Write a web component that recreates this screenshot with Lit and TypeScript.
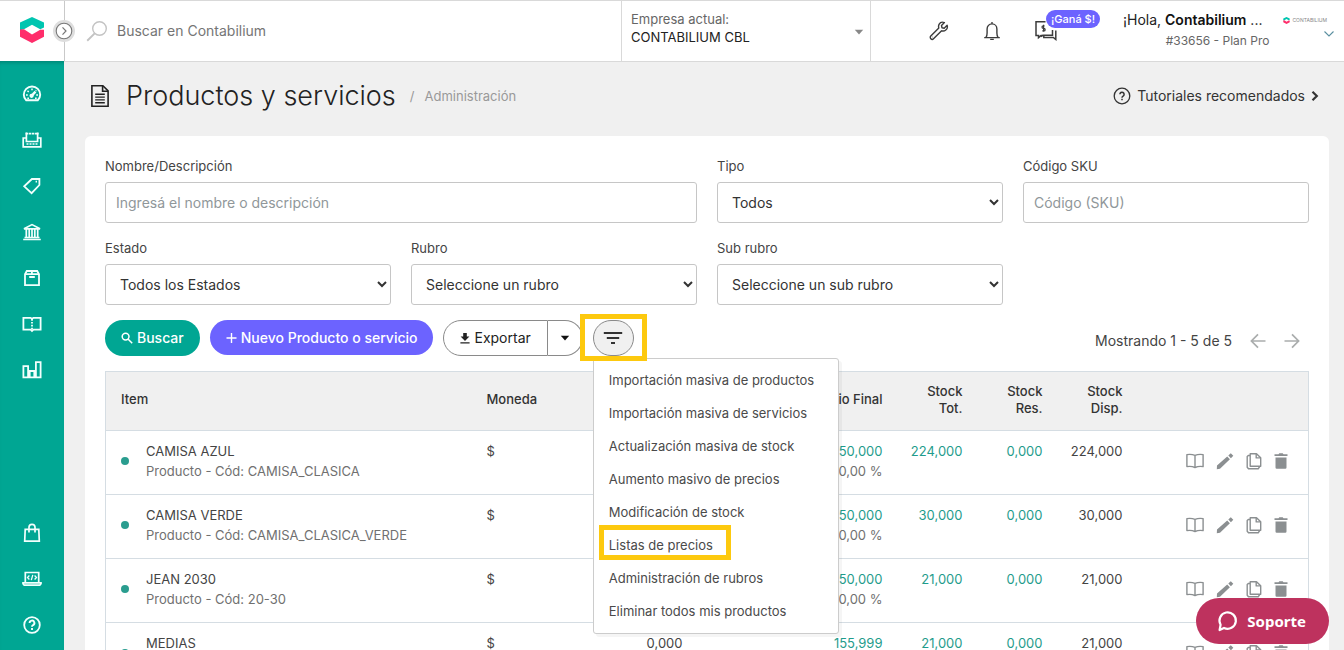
import { LitElement, html, css, svg, nothing, TemplateResult } from "lit";
import { customElement } from "lit/decorators.js";

type Icon = TemplateResult;

const speedometer = html`<svg width="20" height="20" viewBox="0 0 20 20" fill="none" stroke="currentColor" stroke-width="1.900" aria-hidden="true"><path d="M4.200 16.200C2.600 14.700 1.800 12.800 1.800 10.700a8.200 8.200 0 0 1 16.400 0c0 2.100-.8 4-2.400 5.500z"/><path d="M9.500 11.800l4-4.200" stroke-width="2.400"/><path d="M4 11h1.800M14.200 11H16M5.500 6.800l1.200 1.200M10 4.400V6.200M14.300 6.300l-.5.600M5.300 14.200h1.700M13 14.200h1.700" stroke-width="1.500"/><circle cx="9.600" cy="11.800" r="1.200"/></svg>`;
const register = html`<svg width="20" height="20" viewBox="0 0 20 20" fill="none" stroke="currentColor" stroke-width="1.700" aria-hidden="true"><path d="M4.400 2.500v9h11.200v-9"/><path d="M3.600 3.600h13" stroke-dasharray="2.500 .6"/><path d="M4.400 8H1.200v8.900h17.600V8h-3.200"/><path d="M4.500 14.100h11" stroke-width="1.500" stroke-dasharray="2 1"/></svg>`;
const tag = html`<svg width="20" height="20" viewBox="0 0 20 20" fill="none" stroke="currentColor" stroke-width="1.800" aria-hidden="true"><path d="M9.900 3h7.500v6l-7.800 8.200L2.200 10.300z"/><path d="M13.600 5.700h1.400"/></svg>`;
const bank = html`<svg width="20" height="20" viewBox="0 0 20 20" fill="none" stroke="currentColor" aria-hidden="true"><path d="M2 6.800L10 2.600l8 4.200z" stroke-width="1.700"/><path d="M4.300 7v8.500M7.200 7v8.500M10 7v8.500M12.800 7v8.500M15.700 7v8.500" stroke-width="1.700"/><path d="M1.200 17.500h17.600M2.500 15.500h15" stroke-width="1.400"/></svg>`;
const box = html`<svg width="20" height="20" viewBox="0 0 20 20" fill="none" stroke="currentColor" stroke-width="1.800" aria-hidden="true"><path d="M3 6.300L4.800 3h10.400L17 6.300v10.800H3z"/><path d="M3 6.200h14M9.900 3v3M7.200 9h5.600"/></svg>`;
const bookOpen = html`<svg width="20" height="20" viewBox="0 0 20 20" fill="none" stroke="currentColor" stroke-width="1.800" aria-hidden="true"><path d="M10 4.800L8.500 3.800H1.400v11.900h7.200l1.400 1.300 1.400-1.300h7.200V3.800h-7.100z"/><path d="M10 5v12" stroke-dasharray="1.700 1.200"/></svg>`;
const chart = html`<svg width="20" height="20" viewBox="0 0 20 20" fill="none" stroke="currentColor" stroke-width="1.800" aria-hidden="true"><path d="M1.400 6.200h4.700v11.100H1.400zM7.700 11h4.600v6.300H7.700zM13.900 2.200h4.700v15.100h-4.700z"/></svg>`;
const bag = html`<svg width="20" height="20" viewBox="0 0 20 20" fill="none" stroke="currentColor" stroke-width="1.700" aria-hidden="true"><path d="M3.200 6.300h13.600l.5 11.900H2.700z"/><path d="M7 9.500V4.300a3 3 0 0 1 6 0v5.200"/></svg>`;
const laptop = html`<svg width="20" height="20" viewBox="0 0 20 20" fill="none" stroke="currentColor" stroke-width="1.700" aria-hidden="true"><path d="M3.300 13V3.500h13.400V13"/><path d="M1 13.900h18v.9l-1.200 1.400H2.200L1 14.800z"/><path d="M7.400 6.500L5.500 8.500l1.900 2M12.600 6.500l1.900 2-1.900 2M10.800 5.800l-1.500 5.400" stroke-width="1.300"/></svg>`;
const helpBold = html`<svg width="20" height="20" viewBox="0 0 20 20" fill="none" stroke="currentColor" stroke-width="1.800" aria-hidden="true"><circle cx="10" cy="10" r="7.800"/><path d="M7.600 8a2.400 2.400 0 1 1 3.500 2.100c-.8.400-1.100.8-1.100 1.700" stroke-width="1.900"/><path d="M10 13v1.900" stroke-width="1.900"/></svg>`;

const helpThin = html`<svg width="18" height="18" viewBox="0 0 18 18" fill="none" stroke="currentColor" stroke-width="1.300" aria-hidden="true"><circle cx="9" cy="9" r="7.800"/><path d="M6.900 7.300a2.100 2.100 0 1 1 3.200 1.800c-.8.500-1.100.8-1.100 1.600M9 11.800v1.400" stroke-width="1.500"/></svg>`;
const chevronBold = html`<svg width="8" height="12" viewBox="0 0 8 12" fill="none" stroke="currentColor" stroke-width="2.200" aria-hidden="true"><path d="M1.500 1.800L5.800 6l-4.300 4.200"/></svg>`;
const wrench = html`<svg width="20" height="20" viewBox="0 0 20 20" fill="none" stroke="currentColor" stroke-width="1.400" stroke-linejoin="round" aria-hidden="true"><path d="M15.400 1.600c-2-.8-4.200-.2-5.200 1.500-.8 1.300-.8 2.600-.4 3.900L1.800 15a1.900 1.900 0 0 0 0 2.700c.8.800 2 .8 2.700.1l8.100-8c1.500.5 3 .2 4.200-.8 1.400-1.100 1.900-2.900 1.300-4.700l-2.900 2.900-2.200-.4-.5-2.300z"/><path d="M3.500 16h.3"/></svg>`;
const bell = html`<svg width="18" height="20" viewBox="0 0 18 20" fill="none" stroke="currentColor" stroke-width="1.400" aria-hidden="true"><path d="M1.200 16.600h15.600M3 16.400c.9-1.300 1.100-2.700 1.100-4.300V8c0-2.900 2-5.100 4.900-5.100S13.900 5.100 13.900 8v4.100c0 1.600.2 3 1.100 4.300"/><path d="M9 2.800V1M7.200 18.400h3.600"/></svg>`;
const chatMoney = html`<svg width="22" height="20" viewBox="0 0 22 20" fill="none" stroke="currentColor" stroke-width="1.500" aria-hidden="true"><path d="M10.500.8H1v13.800h2.500v2l2.500-2h1.500"/><path d="M17.500 9v5.200H8l-2 1.500M20.800 9.500v9l-2.500-2h-9.500v-2"/><path d="M9.500 4.800H8.300a1.200 1.200 0 0 0 0 2.600h.6a1.200 1.200 0 0 1 0 2.500H7.300M8.600 3.800v7" stroke-width="1.200"/></svg>`;
const chevronDown = html`<svg width="12" height="8" viewBox="0 0 12 8" fill="none" stroke="#5a8fa0" stroke-width="1.100" aria-hidden="true"><path d="M1.500 1.500L6 6l4.500-4.500"/></svg>`;
const documentIcon = html`<svg width="20" height="24" viewBox="0 0 20 24" fill="none" stroke="currentColor" stroke-width="1.600" aria-hidden="true"><path d="M1.900 1.800h11l5.200 5.100v15.300H1.900z"/><path d="M12.600 2v5.200H18"/><path d="M5.200 10.300h9.600M5.200 13.100h9.600M5.200 15.900h9.600M5.200 18.700h9.600" stroke-width="1.400"/></svg>`;
const searchThin = html`<svg width="22" height="22" viewBox="0 0 22 22" fill="none" stroke="#c3c3c3" stroke-width="1.400" aria-hidden="true"><circle cx="13.500" cy="8.500" r="6.800"/><path d="M8.700 13.400L1.200 20.800" stroke-width="1.900"/></svg>`;
const searchSmall = html`<svg width="12" height="12" viewBox="0 0 12 12" fill="none" stroke="currentColor" stroke-width="1.500" aria-hidden="true"><circle cx="4.600" cy="4.600" r="3.400"/><path d="M7.200 7.200l4 4"/></svg>`;
const plus = html`<svg width="11" height="12" viewBox="0 0 11 12" stroke="currentColor" stroke-width="1.400" aria-hidden="true"><path d="M5.500 1v10M.5 6h10"/></svg>`;
const download = html`<svg width="10" height="12" viewBox="0 0 10 12" fill="currentColor" aria-hidden="true"><path d="M3.200 1h3.600v3.500h2.600L5 9 .6 4.500h2.600zM.4 10.200h9.200v1.300H.4z"/></svg>`;
const caret = html`<svg width="10" height="6" viewBox="0 0 10 6" fill="currentColor" aria-hidden="true"><path d="M.8.8h8.400L5 5.400z"/></svg>`;
const filterIcon = html`<svg width="20" height="14" viewBox="0 0 20 14" stroke="currentColor" stroke-width="1.800" aria-hidden="true"><path d="M.8 2h18.400M3.800 7h12.400M8 12h4"/></svg>`;
const arrow = (back: boolean) => html`<svg width="16" height="16" viewBox="0 0 16 16" fill="none" stroke="#aaadad" stroke-width="1.700" aria-hidden="true">${
  back ? svg`<path d="M15.500 8H1.500M8 1.300L1.400 8 8 14.700"/>` : svg`<path d="M.5 8h14M8 1.300L14.600 8 8 14.700"/>`
}</svg>`;

const rowBook = html`<svg width="18" height="16" viewBox="0 0 18 16" fill="none" stroke="currentColor" stroke-width="1.400" stroke-linejoin="round" aria-hidden="true"><path d="M9 2.400C6.500 1.300 3.800 1.100.9 1.600v12c2.900-.5 5.600-.2 8.100.9 2.500-1.100 5.200-1.400 8.100-.9v-12c-2.900-.5-5.600-.3-8.100.8zM9 2.400v12"/></svg>`;
const rowPencil = html`<svg width="18" height="18" viewBox="0 0 18 18" fill="currentColor" aria-hidden="true"><path d="M1 13.600L11.200 4.500l2.700 2.800L4 16.800l-3.200.4zM12.300 3.500L14.800 1.200l2.500 2.600-2.400 2.500z"/></svg>`;
const rowCopy = html`<svg width="16" height="18" viewBox="0 0 16 18" fill="none" stroke="currentColor" stroke-width="1.400" stroke-linejoin="round" aria-hidden="true"><path d="M4.200 1.700h6.300l4.200 4v8.600H4.200z"/><path d="M10.200 1.900v4h4.200M4 3.500H2.300L1.200 4.600v10.700l1.300 1.500h9.700l1.500-2.300"/></svg>`;
const rowTrash = html`<svg width="14" height="18" viewBox="0 0 14 18" fill="currentColor" aria-hidden="true"><path d="M.5 2.300h4L5.300 1.200h3.400l.8 1.100h4v1.800H.5zM1.500 5.400h11v10.200a1.200 1.200 0 0 1-1.200 1.200H2.700a1.200 1.200 0 0 1-1.200-1.200z"/></svg>`;
const bubble = html`<svg width="22" height="22" viewBox="0 0 22 22" fill="none" stroke="currentColor" stroke-width="2.200" stroke-linejoin="round" aria-hidden="true"><path d="M3.600 14.700A8.200 8.200 0 1 1 7 17.900L2.600 20z"/></svg>`;
const brandMark = (w: number, h: number) => html`<svg width=${w} height=${h} viewBox="0 0 24 26" aria-hidden="true"><path fill="#00c5b0" d="M12 0l12 5.600v4.800l-3.800 1.800L12 7.800l-8 4.400L0 13.200V5.600z"/><path fill="#ff2d6b" d="M0 12.600l4-.4 8 5.400 8.200-4.800H24v7L12 26 0 19.800z"/></svg>`;

interface Product {
  name: string;
  code: string;
  cost: string;
  final: string;
  total: string;
  reserved: string;
  available: string;
}

@customElement("app-sidebar")
export class AppSidebar extends LitElement {
  static styles = css`
    :host {
      display: flex;
      flex-direction: column;
      justify-content: space-between;
      padding: 10px 0 2px;
      background: #00a693;
      color: #f2fffd;
      box-sizing: border-box;
      box-shadow: inset 0 4px 4px -3px rgba(0, 0, 0, 0.25);
    }
    .group {
      display: flex;
      flex-direction: column;
    }
    .link {
      display: flex;
      align-items: center;
      justify-content: center;
      height: 46px;
      color: inherit;
    }
  `;

  private link(label: string, icon: Icon) {
    return html`<a class="link" href="#" aria-label=${label}>${icon}</a>`;
  }

  render() {
    return html`
      <nav class="group">
        ${this.link("Inicio", speedometer)} ${this.link("Ventas", register)} ${this.link("Compras", tag)}
        ${this.link("Tesorería", bank)} ${this.link("Inventario", box)} ${this.link("Contabilidad", bookOpen)}
        ${this.link("Reportes", chart)}
      </nav>
      <nav class="group">
        ${this.link("Tienda", bag)} ${this.link("Desarrolladores", laptop)} ${this.link("Ayuda", helpBold)}
      </nav>
    `;
  }
}

@customElement("app-topbar")
export class AppTopbar extends LitElement {
  static styles = css`
    :host {
      display: flex;
      align-items: stretch;
      background: #fff;
      border-bottom: 1px solid #d9d9d9;
      box-sizing: border-box;
      font-family: Inter, "Noto Sans", sans-serif;
      color: #222;
    }
    .search {
      flex: 1;
      display: flex;
      align-items: center;
      gap: 9px;
      padding-left: 22px;
    }
    .search-box {
      flex: 1;
      min-width: 0;
      border: 0;
      outline: 0;
      padding: 0;
      background: none;
      font: 14px/20px Inter, "Noto Sans", sans-serif;
      color: #333;
    }
    .search-box::placeholder {
      color: #757575;
      opacity: 1;
    }
    .company {
      width: 250px;
      box-sizing: border-box;
      display: flex;
      align-items: center;
      padding: 0 6px 0 9px;
      border: solid #d9d9d9;
      border-width: 0 1px;
    }
    .company-text {
      flex: 1;
      display: flex;
      flex-direction: column;
      padding-bottom: 7px;
    }
    .company-label {
      font-size: 13px;
      line-height: 18px;
      color: #666;
    }
    .company-select {
      appearance: none;
      border: 0;
      padding: 0;
      background: none;
      font: 13px/18px Inter, "Noto Sans", sans-serif;
      color: #222;
    }
    .company-caret {
      display: flex;
      color: #888;
      padding-top: 2px;
    }
    .tools {
      display: flex;
      align-items: center;
      gap: 34px;
      padding: 0 0 0 58px;
    }
    .tool {
      position: relative;
      display: flex;
      padding: 0;
      border: 0;
      background: none;
      color: #3c3c3c;
    }
    .badge {
      position: absolute;
      left: 11px;
      top: -11px;
      padding: 0 5px;
      border-radius: 9px;
      background: #6c63ff;
      color: #fff;
      font: 500 11px/18px Inter, "Noto Sans", sans-serif;
      white-space: nowrap;
    }
    .account {
      display: flex;
      align-items: flex-start;
      padding: 8px 9px 0 66px;
    }
    .who {
      display: flex;
      flex-direction: column;
      align-items: flex-end;
      font-size: 14px;
      line-height: 22px;
      white-space: nowrap;
    }
    .hello {
      padding-right: 7px;
      color: #222;
    }
    .hello b {
      font-weight: 600;
      color: #111;
    }
    .plan {
      font-size: 12px;
      line-height: 20px;
      color: #666;
    }
    .logo-col {
      display: flex;
      flex-direction: column;
      align-items: flex-end;
      gap: 6px;
      padding: 7px 0 0 14px;
    }
    .mini-logo {
      display: flex;
      align-items: center;
      gap: 2px;
      padding-right: 8px;
      font-size: 5px;
      line-height: 8px;
      color: #888;
    }
  `;

  render() {
    return html`
      <label class="search">${searchThin}<input class="search-box" type="search" placeholder="Buscar en Contabilium" aria-label="Buscar" /></label>
      <div class="company">
        <div class="company-text">
          <label class="company-label" for="company">Empresa actual:</label>
          <select class="company-select" id="company"><option>CONTABILIUM CBL</option></select>
        </div>
        <span class="company-caret">${caret}</span>
      </div>
      <div class="tools">
        <button class="tool" aria-label="Configuración">${wrench}</button>
        <button class="tool" aria-label="Notificaciones">${bell}</button>
        <button class="tool" aria-label="Referidos">${chatMoney}<span class="badge">¡Ganá $!</span></button>
      </div>
      <div class="account">
        <div class="who">
          <span class="hello">¡Hola, <b>Contabilium</b> ...</span>
          <span class="plan">#33656 - Plan Pro</span>
        </div>
        <div class="logo-col">
          <span class="mini-logo">${brandMark(7, 7)}CONTABILIUM</span>
          ${chevronDown}
        </div>
      </div>
    `;
  }
}

@customElement("product-filters")
export class ProductFilters extends LitElement {
  static styles = css`
    :host {
      display: grid;
      grid-template-columns: repeat(4, minmax(0, 1fr));
      gap: 15px 20px;
      font-family: Inter, "Noto Sans", sans-serif;
    }
    .field {
      display: flex;
      flex-direction: column;
      gap: 5px;
    }
    .wide {
      grid-column: span 2;
    }
    .label {
      font-size: 13px;
      line-height: 21px;
      color: #444;
    }
    .control {
      box-sizing: border-box;
      width: 100%;
      height: 41px;
      border: 1px solid #c6c6c6;
      border-radius: 3px;
      padding: 0 10px;
      background: #fff;
      font: 14px/20px Inter, "Noto Sans", sans-serif;
      color: #333;
    }
    .select {
      padding-right: 0;
    }
    .control::placeholder {
      color: #90979a;
      opacity: 1;
    }
  `;

  private text(id: string, label: string, placeholder: string, wide = false) {
    return html`<div class="field ${wide ? "wide" : ""}">
      <label class="label" for=${id}>${label}</label>
      <input class="control" id=${id} type="text" placeholder=${placeholder} />
    </div>`;
  }

  private pick(id: string, label: string, value: string) {
    return html`<div class="field">
      <label class="label" for=${id}>${label}</label>
      <select class="control select" id=${id}><option>${value}</option></select>
    </div>`;
  }

  render() {
    return html`
      ${this.text("name", "Nombre/Descripción", "Ingresá el nombre o descripción", true)}
      ${this.pick("kind", "Tipo", "Todos")} ${this.text("sku", "Código SKU", "Código (SKU)")}
      ${this.pick("state", "Estado", "Todos los Estados")} ${this.pick("category", "Rubro", "Seleccione un rubro")}
      ${this.pick("subcategory", "Sub rubro", "Seleccione un sub rubro")}
    `;
  }
}

@customElement("product-toolbar")
export class ProductToolbar extends LitElement {
  static styles = css`
    :host {
      display: flex;
      align-items: flex-start;
      justify-content: space-between;
      font-family: Inter, "Noto Sans", sans-serif;
      color: #222;
    }
    .actions {
      display: flex;
      align-items: flex-start;
      gap: 10px;
    }
    .btn {
      display: flex;
      align-items: center;
      justify-content: center;
      gap: 4px;
      box-sizing: border-box;
      height: 36px;
      border: 0;
      border-radius: 18px;
      padding: 0 16px;
      font: 500 14px/20px Inter, "Noto Sans", sans-serif;
      color: #fff;
      white-space: nowrap;
    }
    .search {
      background: #00a693;
    }
    .create {
      height: 35px;
      background: #6c63ff;
    }
    .split {
      display: flex;
    }
    .export {
      border: 1px solid #8a8a8a;
      border-radius: 18px 0 0 18px;
      background: #fff;
      color: #222;
      font-weight: 400;
    }
    .toggle {
      width: 35px;
      padding: 0;
      border: 1px solid #8a8a8a;
      border-left: 0;
      border-radius: 0 18px 18px 0;
      background: #fff;
      color: #111;
    }
    .more {
      position: relative;
    }
    .filter {
      width: 41px;
      padding: 0;
      border: 1px solid #8a8a8a;
      background: #f0f0f0;
      color: #333;
    }
    .ring {
      position: absolute;
      inset: -6px -13px -5px -13px;
      border: 5px solid #fdc90e;
      z-index: 3;
      pointer-events: none;
    }
    .menu {
      position: absolute;
      z-index: 2;
      left: 0;
      top: 38px;
      width: 246px;
      box-sizing: border-box;
      margin: 0;
      padding: 5px 0;
      list-style: none;
      background: #fff;
      border: 1px solid #ccc;
      border-radius: 3px;
      box-shadow: 3px 3px 0 rgba(0, 0, 0, 0.04);
    }
    .item {
      position: relative;
      display: block;
      padding: 0 15px;
      font-size: 13px;
      line-height: 33px;
      color: #4a4a4a;
      text-decoration: none;
      white-space: nowrap;
    }
    .mark {
      position: absolute;
      left: 5px;
      top: -4px;
      width: 132px;
      height: 35px;
      box-sizing: border-box;
      border: 5px solid #fdc90e;
      pointer-events: none;
    }
    .pager {
      display: flex;
      align-items: center;
      gap: 18px;
      padding: 10px 9px 0 0;
      font-size: 14px;
      line-height: 21px;
      color: #444;
    }
    .page {
      display: flex;
      padding: 0;
      border: 0;
      background: none;
    }
  `;

  private items = [
    "Importación masiva de productos",
    "Importación masiva de servicios",
    "Actualización masiva de stock",
    "Aumento masivo de precios",
    "Modificación de stock",
    "Listas de precios",
    "Administración de rubros",
    "Eliminar todos mis productos",
  ];

  render() {
    return html`
      <div class="actions">
        <button class="btn search">${searchSmall}Buscar</button>
        <button class="btn create">${plus}Nuevo Producto o servicio</button>
        <div class="split">
          <button class="btn export">${download}Exportar</button>
          <button class="btn toggle" aria-label="Más formatos">${caret}</button>
        </div>
        <div class="more">
          <button class="btn filter" aria-label="Más acciones" aria-expanded="true">${filterIcon}</button>
          <span class="ring"></span>
          <ul class="menu">
            ${this.items.map(
              (text) => html`<li>
                <a class="item" href="#">${text}${text === "Listas de precios" ? html`<span class="mark"></span>` : nothing}</a>
              </li>`
            )}
          </ul>
        </div>
      </div>
      <div class="pager">
        <span>Mostrando 1 - 5 de 5</span>
        <button class="page" aria-label="Anterior">${arrow(true)}</button>
        <button class="page" aria-label="Siguiente">${arrow(false)}</button>
      </div>
    `;
  }
}

@customElement("product-table")
export class ProductTable extends LitElement {
  static styles = css`
    :host {
      display: block;
      font-family: Inter, "Noto Sans", sans-serif;
    }
    .table {
      width: 100%;
      table-layout: fixed;
      border-collapse: collapse;
      border: 1px solid #d5dde3;
      font-size: 13px;
      line-height: 20px;
      color: #444;
    }
    .c-money {
      width: 127px;
    }
    .c-price {
      width: 100px;
    }
    .c-stock {
      width: 80px;
    }
    .c-actions {
      width: 170px;
    }
    .head {
      height: 55px;
      padding: 0 16px 3px 15px;
      background: #f0f0f0;
      font-weight: 500;
      line-height: 17px;
      text-align: left;
      color: #333;
    }
    .cell {
      height: 40px;
      padding: 10px 16px 13px 15px;
      border-top: 1px solid #d5dde3;
      vertical-align: top;
    }
    .head.num,
    .cell.num {
      text-align: right;
    }
    .cell.num,
    .head.one-line {
      padding-left: 4px;
    }
    .one-line {
      white-space: nowrap;
    }
    .product {
      display: flex;
      align-items: center;
      gap: 17px;
    }
    .dot {
      width: 8px;
      height: 8px;
      border-radius: 50%;
      background: #2a9d8f;
    }
    .sub {
      color: #707070;
    }
    .name,
    .sub {
      display: block;
      white-space: nowrap;
    }
    .teal {
      color: #1f9c8c;
    }
    .row-actions {
      display: flex;
      align-items: center;
      justify-content: flex-end;
      gap: 12px;
      height: 40px;
      padding-right: 4px;
    }
    .act {
      display: flex;
      padding: 0;
      border: 0;
      background: none;
      color: #8b8f91;
    }
  `;

  private products: Product[] = [
    { name: "CAMISA AZUL", code: "CAMISA_CLASICA", cost: "", final: "350,000", total: "224,000", reserved: "0,000", available: "224,000" },
    { name: "CAMISA VERDE", code: "CAMISA_CLASICA_VERDE", cost: "", final: "350,000", total: "30,000", reserved: "0,000", available: "30,000" },
    { name: "JEAN 2030", code: "20-30", cost: "", final: "350,000", total: "21,000", reserved: "0,000", available: "21,000" },
    { name: "MEDIAS", code: "MEDIAS", cost: "0,000", final: "155,999", total: "21,000", reserved: "0,000", available: "21,000" },
  ];

  render() {
    return html`
      <table class="table">
        <colgroup>
          <col />
          <col class="c-money" />
          <col class="c-price" /><col class="c-price" /><col class="c-price" />
          <col class="c-stock" /><col class="c-stock" /><col class="c-stock" />
          <col class="c-actions" />
        </colgroup>
        <thead>
          <tr>
            <th class="head">Item</th>
            <th class="head">Moneda</th>
            <th class="head"></th>
            <th class="head"></th>
            <th class="head num one-line">Precio Final</th>
            <th class="head num">Stock Tot.</th>
            <th class="head num">Stock Res.</th>
            <th class="head num">Stock Disp.</th>
            <th class="head"></th>
          </tr>
        </thead>
        <tbody>
          ${this.products.map(
            (p) => html`<tr>
              <td class="cell">
                <div class="product">
                  <span class="dot"></span>
                  <div><span class="name">${p.name}</span><span class="sub">Producto - Cód: ${p.code}</span></div>
                </div>
              </td>
              <td class="cell">$</td>
              <td class="cell num">${p.cost}</td>
              <td class="cell"></td>
              <td class="cell num"><span class="name teal">${p.final}</span><span class="sub">0,00 %</span></td>
              <td class="cell num teal">${p.total}</td>
              <td class="cell num teal">${p.reserved}</td>
              <td class="cell num">${p.available}</td>
              <td class="cell">
                <div class="row-actions">
                  <button class="act" aria-label="Ver">${rowBook}</button>
                  <button class="act" aria-label="Editar">${rowPencil}</button>
                  <button class="act" aria-label="Duplicar">${rowCopy}</button>
                  <button class="act" aria-label="Eliminar">${rowTrash}</button>
                </div>
              </td>
            </tr>`
          )}
        </tbody>
      </table>
    `;
  }
}

@customElement("app-root")
export class AppRoot extends LitElement {
  static styles = css`
    :host {
      display: grid;
      grid-template: 61px minmax(0, 1fr) / 64px minmax(0, 1fr);
      height: 100vh;
      overflow: hidden;
      background: #f0f0f0;
      font-family: Inter, "Noto Sans", sans-serif;
      color: #222;
      box-sizing: border-box;
      border-top: 1px solid #d9d9d9;
      position: relative;
    }
    .brand {
      position: relative;
      display: flex;
      align-items: center;
      justify-content: center;
      background: #fff;
      border-right: 1px solid #c9c9c9;
      margin-right: -1px;
      padding-bottom: 2px;
      height: 58px;
      z-index: 2;
    }
    .brand-cell {
      background: #fff;
      height: 60px;
    }
    .expand {
      position: absolute;
      right: -11px;
      top: 19px;
      width: 22px;
      height: 22px;
      padding: 0;
      border: 0;
      background: none;
      display: flex;
    }
    .main {
      padding: 0 15px 0 21px;
    }
    .side {
      margin-top: -1px;
    }
    .heading {
      display: flex;
      align-items: center;
      height: 74px;
      padding: 0 10px 6px 5px;
      box-sizing: border-box;
    }
    .title {
      margin: 0 14px 0 16px;
      font-size: 27px;
      line-height: 32px;
      font-weight: 300;
      color: #222;
    }
    .crumb {
      display: flex;
      flex: 1;
      gap: 10px;
      font-size: 13px;
      line-height: 20px;
      color: #999;
    }
    .tutorials {
      display: flex;
      align-items: center;
      gap: 6px;
      font-size: 14px;
      line-height: 20px;
      color: #333;
      text-decoration: none;
    }
    .card {
      display: flex;
      flex-direction: column;
      gap: 15px;
      padding: 20px;
      border-radius: 6px;
      background: #fff;
    }
    .support {
      position: absolute;
      right: 15px;
      bottom: 6px;
      z-index: 5;
      display: flex;
      align-items: center;
      gap: 8px;
      height: 46px;
      padding: 0 23px 0 21px;
      border: 0;
      border-radius: 23px;
      background: #be325e;
      color: #fff;
      font: 700 15px/22px "Noto Sans", sans-serif;
    }
  `;

  render() {
    return html`
      <div class="brand-cell">
        <div class="brand">
          ${brandMark(24, 26)}
          <button class="expand" aria-label="Expandir menú">
            <svg width="22" height="22" viewBox="0 0 22 22" fill="none" aria-hidden="true"><circle cx="11" cy="11" r="11" fill="#dedede" /><circle cx="11" cy="11" r="7.800" fill="#fff" stroke="#777" stroke-width="1.100" /><path d="M9.500 7.300L13 11l-3.500 3.700" stroke="#777" stroke-width="1.200" /></svg>
          </button>
        </div>
      </div>
      <app-topbar></app-topbar>
      <app-sidebar class="side"></app-sidebar>
      <main class="main">
        <header class="heading">
          ${documentIcon}
          <h1 class="title">Productos y servicios</h1>
          <span class="crumb"><span>/</span><span>Administración</span></span>
          <a class="tutorials" href="#">${helpThin}<span>Tutoriales recomendados</span>${chevronBold}</a>
        </header>
        <section class="card">
          <product-filters></product-filters>
          <product-toolbar></product-toolbar>
          <product-table></product-table>
        </section>
      </main>
      <button class="support">${bubble}Soporte</button>
    `;
  }
}
